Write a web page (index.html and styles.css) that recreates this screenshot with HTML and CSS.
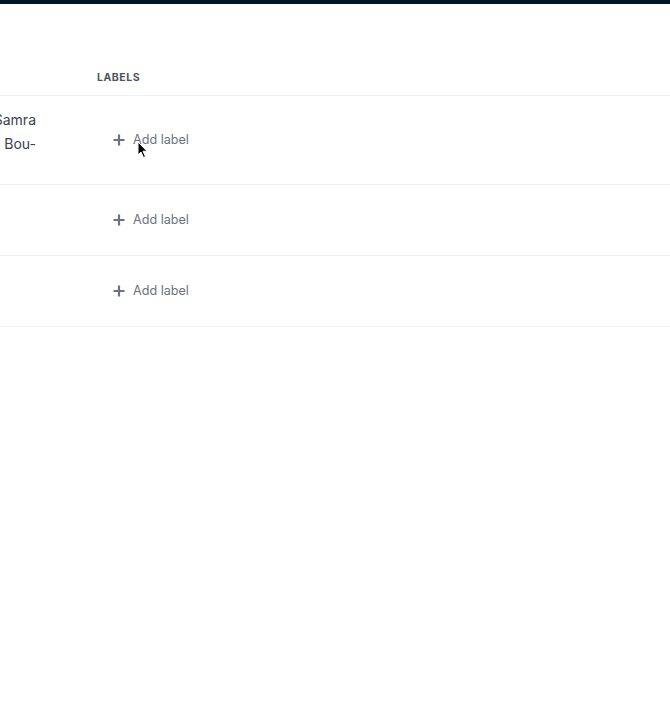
FILE: index.html
```html
<!DOCTYPE html>
<html lang="en">
<head>
<meta charset="utf-8">
<title>Labels</title>
<link rel="stylesheet" href="styles.css">
</head>
<body>
<div class="topbar"></div>
<div class="table">
  <div class="head">
    <div class="hcell"></div>
    <div class="hcell">Labels</div>
  </div>
  <div class="row">
    <div class="name"><span class="line">Rana Samra</span><span class="line">Hanna Bou-</span></div>
    <div class="labels">
      <button class="add"><svg class="plus" viewBox="0 0 12 12" width="12" height="12"><path d="M6 0.5v11M0.5 6h11" stroke="currentColor" stroke-width="2.2"/></svg><span>Add label</span></button>
    </div>
  </div>
  <div class="row">
    <div class="name"></div>
    <div class="labels">
      <button class="add"><svg class="plus" viewBox="0 0 12 12" width="12" height="12"><path d="M6 0.5v11M0.5 6h11" stroke="currentColor" stroke-width="2.2"/></svg><span>Add label</span></button>
    </div>
  </div>
  <div class="row">
    <div class="name"></div>
    <div class="labels">
      <button class="add"><svg class="plus" viewBox="0 0 12 12" width="12" height="12"><path d="M6 0.5v11M0.5 6h11" stroke="currentColor" stroke-width="2.2"/></svg><span>Add label</span></button>
    </div>
  </div>
</div>
<svg class="cursor" viewBox="0 0 12 18" width="12" height="18"><path d="M1 1 L1 14 L4 11 L6.5 16.5 L8.5 15.6 L6 10.2 L10 10.2 Z" fill="#000" stroke="#fff" stroke-width="1"/></svg>
</body>
</html>
```

FILE: styles.css
```css
html, body {
  margin: 0;
  padding: 0;
  background: #ffffff;
  overflow: hidden;
}
body {
  font-family: Inter, "Liberation Sans", sans-serif;
  position: relative;
  height: 724px;
}
.topbar {
  height: 4px;
  background: #021526;
}
.table {
  padding-top: 66px;
}
.head,
.row {
  display: grid;
  grid-template-columns: 97px 1fr;
  border-bottom: 1px solid #eef0f2;
}
.hcell {
  font-size: 10.5px;
  line-height: 16px;
  font-weight: 700;
  text-transform: uppercase;
  letter-spacing: 0.05em;
  color: #4b5563;
  padding-bottom: 9px;
}
.row {
  min-height: 70px;
}
.name {
  overflow: hidden;
  padding: 12px 61px 28px 0;
  display: flex;
  flex-direction: column;
  align-items: flex-end;
  font-size: 14px;
  line-height: 24px;
  color: #374151;
  white-space: nowrap;
}
.name .line {
  display: block;
  flex: none;
}
.labels {
  align-self: center;
  display: flex;
}
.add {
  display: inline-flex;
  align-items: center;
  gap: 8px;
  border: 0;
  background: transparent;
  padding: 2px 16px;
  font-family: inherit;
  font-size: 12.6px;
  line-height: 18px;
  color: #6b7280;
  cursor: pointer;
}
.plus {
  color: #6b7280;
  display: block;
}
.cursor {
  position: absolute;
  left: 137px;
  top: 141px;
}
```
